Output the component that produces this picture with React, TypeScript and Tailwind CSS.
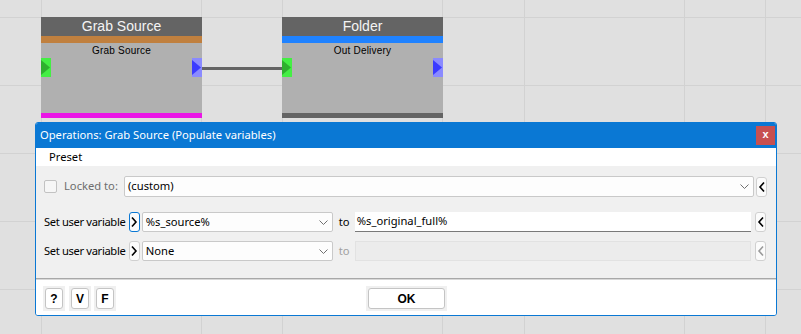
import React from 'react';

const gridX = [41, 201, 282, 442, 524, 684, 765];
const gridY = [17, 85, 153, 221, 289];

const uiFont = { fontFamily: '"Noto Sans", "Open Sans", sans-serif' };
const nodeFont = { fontFamily: '"Liberation Sans", Arial, sans-serif' };

interface NodeProps {
  left: number;
  title: string;
  subtitle: string;
  barClass: string;
  bottomClass: string;
}

const Port: React.FC<{ side: 'in' | 'out' }> = ({ side }) => (
  <div className={`w-[10px] h-[19px] ${side === 'in' ? 'bg-[#44ee44]' : 'bg-[#8a8aff]'}`}>
    <svg width="10" height="19" viewBox="0 0 10 19">
      <polygon points="0,2 9,9.5 0,17" fill={side === 'in' ? '#2fb02f' : '#3b3bff'} />
    </svg>
  </div>
);

const GraphNode: React.FC<NodeProps> = ({ left, title, subtitle, barClass, bottomClass }) => (
  <div className="absolute top-[17px] w-[161px] flex flex-col" style={{ left, ...nodeFont }}>
    <div className="h-[19px] bg-[#646464] text-[#f4f4f4] text-[14px] leading-[19px] text-center">{title}</div>
    <div className={`h-[7px] ${barClass}`} />
    <div className="h-[70px] bg-[#b0b0b0] flex flex-col">
      <div className="text-[10px] leading-[14px] text-black text-center pt-[1px] tracking-[0.2px]">{subtitle}</div>
      <div className="flex justify-between">
        <Port side="in" />
        <Port side="out" />
      </div>
    </div>
    <div className={`h-[5px] ${bottomClass}`} />
  </div>
);

const Chevron: React.FC<{ dir: 'left' | 'right'; color?: string }> = ({ dir, color = '#000' }) => (
  <svg width="8" height="12" viewBox="0 0 8 12">
    <polyline
      points={dir === 'right' ? '2,1.5 6,6 2,10.5' : '6,1.5 2,6 6,10.5'}
      fill="none"
      stroke={color}
      strokeWidth="1.6"
    />
  </svg>
);

const SmallBtn: React.FC<{ dir: 'left' | 'right'; focused?: boolean; disabled?: boolean; h: number }> = ({
  dir,
  focused,
  disabled,
  h,
}) => (
  <div
    className={`w-[11px] flex items-center justify-center rounded-[3px] border bg-[#fbfbfb] ${
      focused ? 'border-[#0a78d4]' : 'border-[#d0d0d0]'
    }`}
    style={{ height: h }}
  >
    <Chevron dir={dir} color={disabled ? '#9a9a9a' : '#000'} />
  </div>
);

const ComboArrow = () => (
  <svg width="9" height="5" viewBox="0 0 9 5">
    <polyline points="0.5,0.5 4.5,4.5 8.5,0.5" fill="none" stroke="#707070" strokeWidth="1" />
  </svg>
);

const Combo: React.FC<{ value: string; width?: number; grow?: boolean; h: number }> = ({ value, width, grow, h }) => (
  <div
    className={`flex items-center justify-between bg-[#fdfdfd] border border-[#c9c9c9] rounded-[2px] pl-[3px] pr-[4px] text-[11.2px] text-black ${
      grow ? 'flex-1' : ''
    }`}
    style={{ width, height: h }}
  >
    <span>{value}</span>
    <ComboArrow />
  </div>
);

const FooterBtn: React.FC<{ label: string; w: number }> = ({ label, w }) => (
  <div className="p-[2px] bg-[#f0f0f0]">
    <div
      className="h-[21px] flex items-center justify-center bg-white border border-[#c4c4c4] rounded-[3px] text-[12px] font-bold text-black"
      style={{ width: w, fontFamily: '"Liberation Sans", Arial, sans-serif' }}
    >
      {label}
    </div>
  </div>
);

const VarRow: React.FC<{ value: string; target: string; active: boolean; focused?: boolean }> = ({
  value,
  target,
  active,
  focused,
}) => (
  <div className="flex items-center h-[20px] pl-[8px] pr-[10px]">
    <div className="w-[85px] text-[11.2px] tracking-[-0.35px] text-black whitespace-nowrap">Set user variable</div>
    <SmallBtn dir="right" focused={focused} h={20} />
    <div className="ml-[2px]">
      <Combo value={value} width={191} h={20} />
    </div>
    <div className={`w-[22px] pl-[6px] text-[11.2px] ${active ? 'text-black' : 'text-[#a0a0a0]'}`}>to</div>
    <div
      className={`w-[397px] h-[20px] flex items-center pl-[2px] text-[11.2px] text-black ${
        active ? 'bg-white border-b border-b-[#7a7a7a]' : 'bg-[#ececec] border border-[#e2e2e2]'
      }`}
    >
      {target}
    </div>
    <div className="ml-[4px]">
      <SmallBtn dir="left" disabled={!active} h={20} />
    </div>
  </div>
);

export default function App() {
  return (
    <div className="relative w-[801px] h-[334px] overflow-hidden bg-[#e0e0e0]">
      {/* canvas grid */}
      {gridX.map((x) => (
        <div key={`x${x}`} className="absolute top-0 bottom-0 w-px bg-[#d2d2d2]" style={{ left: x }} />
      ))}
      {gridY.map((y) => (
        <div key={`y${y}`} className="absolute left-0 right-0 h-px bg-[#d2d2d2]" style={{ top: y }} />
      ))}

      {/* connection */}
      <div className="absolute left-[202px] top-[67px] w-[80px] h-[3px] bg-[#646464]" />

      <GraphNode left={41} title="Grab Source" subtitle="Grab Source" barClass="bg-[#c0803f]" bottomClass="bg-[#ea16e6]" />
      <GraphNode left={282} title="Folder" subtitle="Out Delivery" barClass="bg-[#1f82ff]" bottomClass="bg-[#646464]" />

      {/* dialog window */}
      <div
        className="absolute left-[35px] top-[122px] w-[742px] h-[194px] border border-[#0a78d4] rounded-[3px] bg-white flex flex-col overflow-hidden"
        style={uiFont}
      >
        <div className="h-[25px] bg-[#0a78d4] flex items-center justify-between pl-[4px] pr-[1px]">
          <span className="text-white text-[11.2px]">Operations: Grab Source (Populate variables)</span>
          <div
            className="w-[19px] h-[19px] bg-[#c75050] flex items-center justify-center text-white text-[11px] font-bold leading-none pb-[2px]"
            style={nodeFont}
          >
            x
          </div>
        </div>

        <div className="h-[18px] bg-white flex items-center pl-[13px] text-[11.2px] text-black">Preset</div>

        <div className="h-[112px] bg-[#f0f0f0] flex flex-col pt-[10px]">
          <div className="flex items-center h-[21px] pl-[8px] pr-[9px]">
            <div className="w-[80px] flex items-center">
              <div className="w-[13px] h-[13px] border border-[#c2c2c2] rounded-[2px] bg-[#f6f6f6]" />
              <span className="ml-[7px] text-[11.2px] text-[#6d6d6d]">Locked to:</span>
            </div>
            <Combo value="(custom)" grow h={21} />
            <div className="ml-[2px]">
              <SmallBtn dir="left" h={20} />
            </div>
          </div>
          <div className="mt-[15px]">
            <VarRow value="%s_source%" target="%s_original_full%" active focused />
          </div>
          <div className="mt-[9px]">
            <VarRow value="None" target="" active={false} />
          </div>
        </div>

        <div className="h-[2px] bg-[#a8a8a8] border-b border-b-[#d8d8d8]" />

        <div className="flex-1 bg-white flex items-start pt-[6px] pl-[7px]">
          <div className="flex gap-[2px]">
            <FooterBtn label="?" w={18} />
            <div className="ml-[2px]">
              <FooterBtn label="V" w={18} />
            </div>
            <div className="ml-[1px]">
              <FooterBtn label="F" w={18} />
            </div>
          </div>
          <div className="ml-[250px]">
            <FooterBtn label="OK" w={77} />
          </div>
        </div>
      </div>
    </div>
  );
}
